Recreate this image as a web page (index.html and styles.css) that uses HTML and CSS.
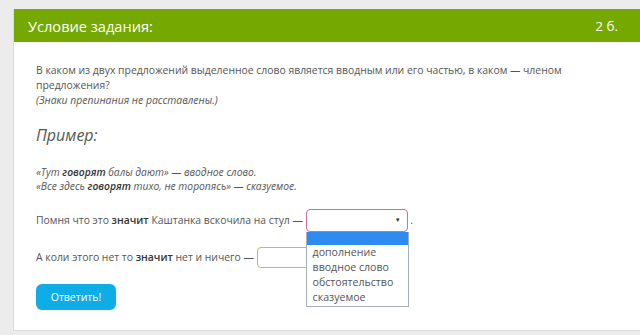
FILE: index.html
```html
<!DOCTYPE html>
<html lang="ru">
<head>
    <meta charset="UTF-8">
    <title>Условие задания</title>
    <link rel="stylesheet" href="styles.css">
</head>
<body>
    <div class="card">
        <div class="card-header">
            <span class="title">Условие задания:</span>
            <span class="points">2 б.</span>
        </div>

        <div class="card-body">
            <p class="task">
                В каком из двух предложений выделенное слово является вводным или его частью, в каком — членом предложения?<br>
                <em>(Знаки препинания не расставлены.)</em>
            </p>

            <h2>Пример:</h2>

            <p class="example">
                «Тут <b>говорят</b> балы дают» — вводное слово.<br>
                «Все здесь <b>говорят</b> тихо, не торопясь» — сказуемое.
            </p>

            <div class="row">
                Помня что это <b>значит</b> Каштанка вскочила на стул — <span class="select-wrap"><span class="select open"><span class="arrow">&#9660;</span></span><ul class="options">
                        <li class="selected">&nbsp;</li>
                        <li>дополнение</li>
                        <li>вводное слово</li>
                        <li>обстоятельство</li>
                        <li>сказуемое</li>
                    </ul></span> .
            </div>

            <div class="row second">
                А коли этого нет то <b>значит</b> нет и ничего — <span class="select"></span>
            </div>

            <button type="button" class="submit">Ответить!</button>
        </div>
    </div>
</body>
</html>
```

FILE: styles.css
```css
body {
    margin: 0;
    padding: 9px 0 0 13px;
    background-color: #ececec;
    font-family: "Open Sans", Arial, sans-serif;
    font-size: 10.4px;
    color: #555;
    overflow: hidden;
}

.card {
    width: 640px;
    background-color: #fff;
    border: 1px solid #dcdcdc;
    border-top: none;
}

.card-header {
    display: flex;
    justify-content: space-between;
    align-items: center;
    height: 33px;
    padding: 0 36px 0 14px;
    background-color: #75a800;
    color: #fff;
}

.title {
    font-size: 14.6px;
}

.points {
    font-size: 13.5px;
}

.card-body {
    padding: 21px 22px 20px 22px;
}

.task {
    margin: 0;
    width: 560px;
    line-height: 15px;
}

h2 {
    margin: 15px 0 0 0;
    font-size: 16px;
    font-weight: normal;
    font-style: italic;
    line-height: 24px;
    color: #555;
}

.example {
    margin: 18px 0 0 0;
    font-size: 10.3px;
    font-style: italic;
    line-height: 14px;
}

b {
    font-weight: 600;
    color: #333;
}

.row {
    margin-top: 16px;
    height: 23px;
    line-height: 23px;
}

.row.second {
    margin-top: 15px;
    height: 21px;
    line-height: 21px;
}

.select-wrap {
    position: relative;
    display: inline-block;
    vertical-align: top;
}

.select {
    display: inline-block;
    vertical-align: top;
    box-sizing: border-box;
    width: 102px;
    height: 21px;
    border: 1px solid #a9c46b;
    border-radius: 4px;
    background-color: #fff;
}

.select.open {
    display: block;
    height: 23px;
    border-color: #d26aa3;
    position: relative;
}

.arrow {
    position: absolute;
    right: 6px;
    top: 0;
    line-height: 21px;
    font-size: 6px;
    color: #333;
}

.options {
    position: absolute;
    top: 23px;
    left: 0;
    z-index: 2;
    box-sizing: border-box;
    width: 103px;
    margin: 0;
    padding: 0 0 1px 0;
    list-style: none;
    background-color: #fff;
    border: 1px solid #a6b0ba;
    border-top: none;
    font-size: 10.6px;
    line-height: 15px;
}

.options li {
    padding-left: 6px;
}

.options li.selected {
    height: 13px;
    background-color: #2e8bf0;
}

.submit {
    display: block;
    margin-top: 16px;
    width: 80px;
    height: 26px;
    border: none;
    border-radius: 6px;
    background-color: #0eade6;
    color: #fff;
    font-family: "Open Sans", Arial, sans-serif;
    font-size: 10.5px;
    cursor: pointer;
}
```
